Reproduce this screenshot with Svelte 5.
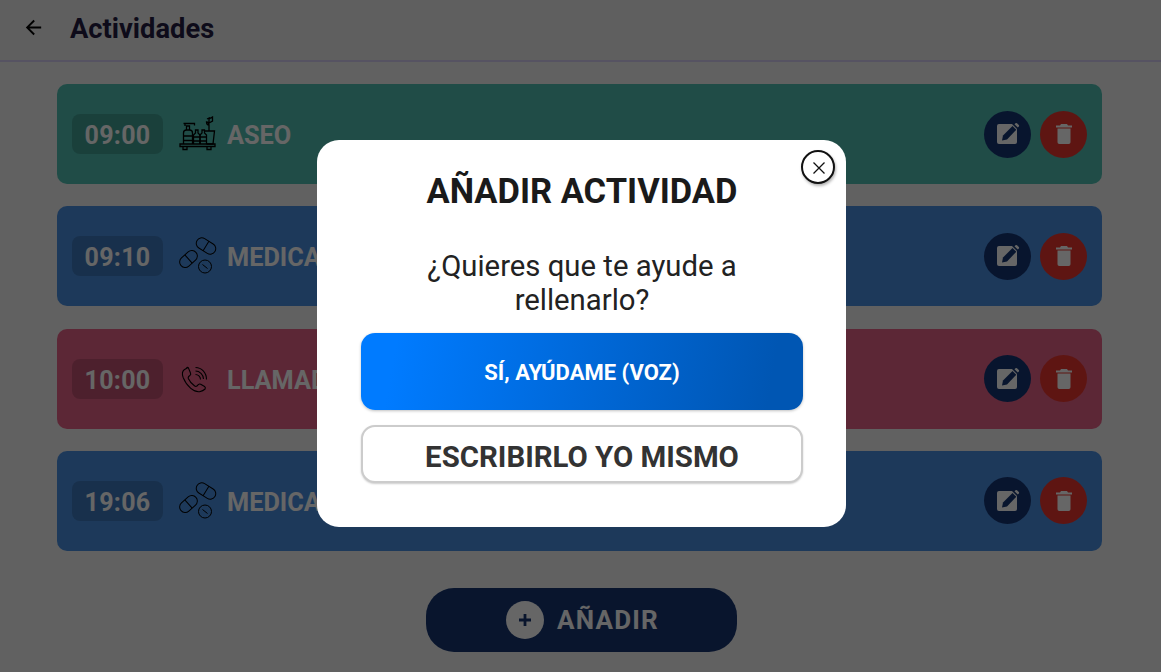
<script>
  const activities = [
    { time: '09:00', label: 'ASEO', kind: 'aseo', color: 'green' },
    { time: '09:10', label: 'MEDICACIÓN', kind: 'pills', color: 'blue' },
    { time: '10:00', label: 'LLAMADA', kind: 'phone', color: 'red' },
    { time: '19:06', label: 'MEDICACIÓN', kind: 'pills', color: 'blue' }
  ];
</script>

<div class="page">
  <header class="topbar">
    <button class="back" aria-label="Volver">
      <svg width="23" height="23" viewBox="0 0 24 24"><path d="M20 11H7.830l5.590-5.590L12 4l-8 8 8 8 1.410-1.410L7.830 13H20z" /></svg>
    </button>
    <h1>Actividades</h1>
  </header>

  <main class="list">
    {#each activities as a}
      <div class="card {a.color}">
        <span class="time">{a.time}</span>
        <span class="icon">
          {#if a.kind === 'aseo'}
            <svg width="38" height="36" viewBox="0 0 38 36" fill="none" stroke="#000" stroke-width="1.300">
              <path d="M1 28h35v2.500H1zM4 30.500v3h4v-3M28 30.500v3h4v-3" />
              <path d="M4.500 28v-11q0-3 3-3h3q3 0 3 3v11M4.500 20h9M4.500 24.500h9" />
              <path d="M7.500 14v-4h3v4M6 10v-2.500h9.500v2M7 7.500H4.500" />
              <path d="M14.500 28v-9l2-2v-3h2.500v3l2 2v9M14.500 21h6.500M14.500 25h6.500" />
              <path d="M21 28v-9l2-2v-3h2.500v3l2 2v9M21 21h6.500M21 25h6.500" />
              <path d="M25.500 15h10l-1.500 13h-6.500" />
              <path d="M30 15v-6M30 9c-1.500 0-2.500-1-2.500-3 1.500 0 2.500 1 2.500 3zM30 7V3l3.500-2v4zM28 3l3-1.500" />
            </svg>
          {:else if a.kind === 'pills'}
            <svg width="38" height="38" viewBox="0 0 38 38" fill="none" stroke="#000" stroke-width="1">
              <g transform="rotate(32 27 9)"><rect x="16.500" y="3.500" width="21" height="11" rx="5.500" /><path d="M27 3.500v11" /></g>
              <g transform="rotate(-42 9.500 22)"><rect x="-0.500" y="16.500" width="20" height="11" rx="5.500" /><path d="M9.500 16.500v11" /></g>
              <circle cx="26" cy="29.500" r="6.500" /><path d="M23.500 27.500l5 4" />
            </svg>
          {:else}
            <svg width="38" height="38" viewBox="0 0 38 38" fill="none" stroke="#000" stroke-width="1.100" stroke-linejoin="round">
              <path d="M9 7.500l-3.800 2.200c-2.200 1.700-2.200 4.400-1.100 7.700 1.700 4.400 4.400 8.200 7.700 11 2.700 2.200 5.500 3.800 8.800 3.300 1.700-.3 4-1.100 5.500-2.700.5-1.100 .3-1.900-.5-2.500l-3.900-2.200c-.9-.5-1.600-.4-2.400.3l-1.400 1.400c-.7.500-1.300.5-2.200 0-2.800-2-5-4.400-6.400-7.500-.3-.9-.2-1.400.4-2l1.300-1.100c.8-.7 1-1.400.5-2.400l-1.800-4.400c-.3-1-1-1.400-1.900-1.100z" />
              <path d="M16.500 7.500c6 0 11 5 11 12M16.500 11c4 0 8 3.500 8 8M16.500 14.500c2.500 0 5 2 5 5" />
            </svg>
          {/if}
        </span>
        <span class="label">{a.label}</span>
        <span class="actions">
          <button class="round edit" aria-label="Editar">
            <svg width="24" height="24" viewBox="0 0 24 24">
              <path class="solid" d="M3 2h13l5 5v13a2 2 0 0 1-2 2H3a2 2 0 0 1-2-2V4a2 2 0 0 1 2-2z" />
              <path class="cut" d="M6 18.500l1-5 9.500-9.500 3.800 3.800-9.300 9.700z" />
              <path class="solid" d="M18.500 2.200l1-1q.8-.6 1.500 0l1.800 1.800q.6.7 0 1.500l-1 1z" />
            </svg>
          </button>
          <button class="round del" aria-label="Borrar">
            <svg width="24" height="24" viewBox="0 0 24 24">
              <path class="solid" d="M9 2h6l1 1.500h4v2H4v-2h4zM5.500 6.500h13v13.700a1.800 1.800 0 0 1-1.800 1.800H7.300a1.800 1.800 0 0 1-1.800-1.800z" />
            </svg>
          </button>
        </span>
      </div>
    {/each}
  </main>

  <div class="add-row">
    <button class="add">
      <span class="plus"><svg width="14" height="14" viewBox="0 0 14 14"><path d="M5.600 1h2.800v4.600H13v2.800H8.400V13H5.600V8.400H1V5.600h4.600z" /></svg></span>
      AÑADIR
    </button>
  </div>

  <div class="overlay">
    <div class="modal">
      <button class="close" aria-label="Cerrar">
        <svg width="14" height="14" viewBox="0 0 14 14"><path d="M1.500 1.500l11 11M12.500 1.500l-11 11" stroke="#111" stroke-width="1.300" /></svg>
      </button>
      <h2>AÑADIR ACTIVIDAD</h2>
      <p>¿Quieres que te ayude a<br />rellenarlo?</p>
      <button class="primary">SÍ, AYÚDAME (VOZ)</button>
      <button class="secondary">ESCRIBIRLO YO MISMO</button>
    </div>
  </div>
</div>

<style>
  :global(body) {
    margin: 0;
    background: #f2f2f2;
    font-family: Roboto, sans-serif;
    overflow: hidden;
  }

  button {
    font-family: inherit;
    border: none;
    cursor: pointer;
    padding: 0;
  }

  .page {
    height: 672px;
    position: relative;
    overflow: hidden;
  }

  .topbar {
    height: 60px;
    display: flex;
    align-items: center;
    background: #eee;
    border-bottom: 2px solid #d8d0f5;
  }

  .back {
    background: none;
    width: 23px;
    height: 23px;
    margin-left: 22px;
    margin-top: -6px;
    line-height: 0;
  }

  h1 {
    margin: -3px 0 0 25px;
    font-size: 27.300px;
    font-weight: 700;
    color: #241d42;
  }

  .list {
    display: flex;
    flex-direction: column;
    gap: 22.300px;
    padding: 22px 59px 0 57px;
  }

  .card {
    height: 100px;
    border-radius: 10px;
    display: flex;
    align-items: center;
    padding: 0 15px;
  }

  .green { background: #50bfb2; }
  .blue { background: #4a90e2; }
  .red { background: #e66288; }

  .time {
    width: 91px;
    height: 40px;
    padding-top: 3px;
    box-sizing: border-box;
    border-radius: 8px;
    background: rgba(0, 0, 0, 0.16);
    color: #fff;
    font-size: 25px;
    font-weight: 700;
    display: flex;
    align-items: center;
    justify-content: center;
    letter-spacing: 0.3px;
  }

  .icon {
    width: 38px;
    height: 40px;
    margin-left: 16px;
    display: flex;
    align-items: center;
    justify-content: center;
  }

  .label {
    margin-left: 10px;
    padding-top: 3px;
    color: #fff;
    font-size: 25.300px;
    font-weight: 700;
  }

  .actions {
    margin-left: auto;
    display: flex;
    gap: 9px;
  }

  .round {
    width: 47px;
    height: 47px;
    border-radius: 50%;
    display: flex;
    align-items: center;
    justify-content: center;
  }

  .solid { fill: #fff; }
  .cut { fill: #163674; }
  .edit { background: #163674; }
  .del { background: #eb362d; }

  .add-row {
    display: flex;
    justify-content: center;
    padding: 37px 0 0 2px;
  }

  .add {
    width: 311px;
    height: 64px;
    padding-left: 2px;
    border-radius: 28px;
    background: #173672;
    color: #fff;
    font-size: 26px;
    font-weight: 700;
    letter-spacing: 1.200px;
    display: flex;
    align-items: center;
    justify-content: center;
    gap: 13px;
  }

  .plus {
    width: 38px;
    height: 38px;
    border-radius: 50%;
    background: #fff;
    display: flex;
    align-items: center;
    justify-content: center;
  }

  .plus path { fill: #173672; }

  .overlay {
    position: absolute;
    inset: 0;
    background: rgba(0, 0, 0, 0.6);
    display: flex;
    align-items: flex-start;
    justify-content: center;
    padding: 140px 0 0 2px;
    box-sizing: border-box;
  }

  .modal {
    position: relative;
    width: 529px;
    height: 387px;
    box-sizing: border-box;
    background: #fff;
    border-radius: 22px;
    padding: 0 43px 0 44px;
    display: flex;
    flex-direction: column;
    align-items: center;
  }

  .close {
    position: absolute;
    top: 10px;
    right: 11px;
    width: 34px;
    height: 34px;
    border-radius: 50%;
    background: #fff;
    border: 2px solid #111;
    box-shadow: 1px 2px 3px rgba(0, 0, 0, 0.3);
    display: flex;
    align-items: center;
    justify-content: center;
    box-sizing: border-box;
    padding: 1px 0 0 1px;
  }

  h2 {
    margin: 30px 0 0;
    font-size: 34.500px;
    line-height: 42px;
    font-weight: 700;
    color: #1a1a1a;
  }

  p {
    margin: 37px 0 0;
    font-size: 29.300px;
    line-height: 34px;
    color: #222;
    text-align: center;
  }

  .primary {
    width: 442px;
    height: 77px;
    flex: none;
    margin-top: 16px;
    padding-top: 2px;
    border-radius: 14px;
    color: #fff;
    font-size: 22px;
    font-weight: 700;
    background: linear-gradient(100deg, #007bff 8%, #0056b3 92%);
    box-shadow: 0 1px 3px rgba(0, 0, 0, 0.25);
  }

  .secondary {
    width: 442px;
    height: 58px;
    flex: none;
    margin-top: 15px;
    padding-top: 6px;
    border-radius: 14px;
    background: #fff;
    border: 2px solid #ccc;
    box-sizing: border-box;
    color: #333;
    font-size: 29.400px;
    font-weight: 700;
    box-shadow: 0 1px 2px rgba(0, 0, 0, 0.2);
  }
</style>
